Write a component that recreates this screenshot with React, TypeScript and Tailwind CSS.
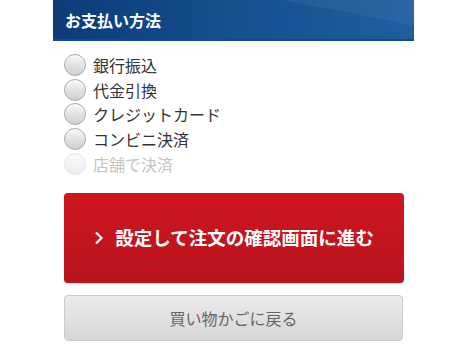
import React from "react";

const methods = [
  { label: "銀行振込", disabled: false },
  { label: "代金引換", disabled: false },
  { label: "クレジットカード", disabled: false },
  { label: "コンビニ決済", disabled: false },
  { label: "店舗で決済", disabled: true },
];

function Radio({ disabled }: { disabled: boolean }) {
  return (
    <span
      className={`inline-block h-[22px] w-[22px] shrink-0 rounded-full border ${
        disabled
          ? "border-[#e6e6e6] bg-gradient-to-b from-[#fafafa] to-[#ededed]"
          : "border-[#a9a9a9] bg-gradient-to-b from-[#f7f7f7] to-[#cfcfcf] shadow-[inset_0_1px_1px_rgba(255,255,255,0.9)]"
      }`}
    />
  );
}

export default function App() {
  return (
    <div
      className="h-[350px] w-[460px] overflow-hidden bg-white"
      style={{ fontFamily: '"Noto Sans CJK JP", "Noto Sans", sans-serif' }}
    >
      <div className="ml-[53px] w-[361px]">
        <div className="relative h-[41px] overflow-hidden border-b-2 border-[#0b4a98] bg-gradient-to-r from-[#0c3b78] via-[#15508f] to-[#1f5e9e]">
          <svg
            className="absolute inset-0"
            width="361"
            height="41"
            viewBox="0 0 361 41"
            preserveAspectRatio="none"
          >
            <path
              d="M230 0 C 280 10, 325 18, 361 26 L361 0 Z"
              fill="rgba(255,255,255,0.05)"
            />
          </svg>
          <div className="relative flex h-full items-center pl-[12px] text-[16px] font-bold leading-none text-white">
            お支払い方法
          </div>
        </div>
        <div className="h-[8px] bg-gradient-to-b from-[#fdfbf3] to-white" />

        <div className="flex flex-col pl-[11px] pt-[4px]">
          {methods.map((m) => (
            <label
              key={m.label}
              className="flex h-[24.6px] items-center gap-[7px]"
            >
              <Radio disabled={m.disabled} />
              <span
                className={`text-[16px] leading-none ${
                  m.disabled ? "text-[#c4c4c4]" : "text-[#333333]"
                }`}
              >
                {m.label}
              </span>
            </label>
          ))}
        </div>

        <div className="mt-[17px] flex flex-col gap-[12px] pl-[11px]">
          <button className="flex h-[90px] w-[340px] items-center justify-center gap-[11px] rounded-[4px] bg-gradient-to-b from-[#d0161f] to-[#b8141d] text-[18.5px] font-bold text-white shadow-[0_1px_1px_rgba(0,0,0,0.15)]">
            <svg width="10" height="14" viewBox="0 0 10 14">
              <path
                d="M2 1.5 L7.5 7 L2 12.5"
                fill="none"
                stroke="white"
                strokeWidth="2.2"
              />
            </svg>
            <span>設定して注文の確認画面に進む</span>
          </button>
          <button className="flex h-[46px] w-[339px] items-center justify-center rounded-[4px] border border-[#cdcdcd] bg-gradient-to-b from-[#ececec] to-[#d6d6d6] text-[16px] text-[#666666]">
            買い物かごに戻る
          </button>
        </div>
      </div>
    </div>
  );
}
